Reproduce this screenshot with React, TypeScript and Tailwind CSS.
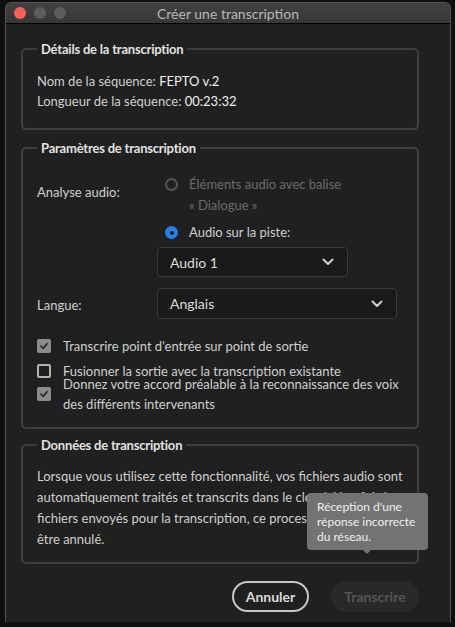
import React from "react";

const font = { fontFamily: "Lato, 'Open Sans', sans-serif" };

function Chevron() {
  return (
    <svg width="12" height="8" viewBox="0 0 12 8" fill="none">
      <path d="M1.5 1.5 L6 6 L10.5 1.5" stroke="#d0d0d0" strokeWidth="2" strokeLinecap="round" strokeLinejoin="round" />
    </svg>
  );
}

function Select({ label, className }: { label: string; className: string }) {
  return (
    <div className={`flex items-center justify-between rounded-[4px] border border-[#3a3a3a] bg-[#1a1a1a] pl-3 pr-[13px] text-[14px] text-[#dcdcdc] ${className}`}>
      <span>{label}</span>
      <Chevron />
    </div>
  );
}

function Checkbox({ checked }: { checked: boolean }) {
  if (!checked) {
    return <span className="h-[14px] w-[14px] shrink-0 rounded-[2px] border-2 border-[#b4b4b4] bg-[#1e1e1e]" />;
  }
  return (
    <span className="flex h-[14px] w-[14px] shrink-0 items-center justify-center rounded-[2px] bg-[#8c8c8c]">
      <svg width="10" height="10" viewBox="0 0 10 10" fill="none">
        <path d="M2 5.2 L4.2 7.3 L8 2.8" stroke="#2b2b2b" strokeWidth="1.8" strokeLinecap="round" strokeLinejoin="round" />
      </svg>
    </span>
  );
}

function Group({ title, className, children }: { title: string; className?: string; children: React.ReactNode }) {
  return (
    <fieldset className={`rounded-[5px] border-2 border-[#3e3e3e] px-[14px] ${className ?? ""}`}>
      <legend className="px-1 text-[13px] font-bold leading-5 tracking-[-0.2px] text-[#e2e2e2]">{title}</legend>
      {children}
    </fieldset>
  );
}

export default function App() {
  return (
    <div className="relative h-[627px] w-[455px] overflow-hidden bg-[#0f0f0f] pl-[5px] pr-[4px] pt-[2px]" style={font}>
      <div className="flex h-[620px] flex-col overflow-hidden rounded-t-[6px] border border-[#555] border-b-0 bg-[#202020]">
        {/* title bar */}
        <div className="relative flex h-[21px] shrink-0 items-center border-b border-black bg-gradient-to-b from-[#414141] to-[#373737]">
          <div className="absolute left-[8px] top-[4px] flex gap-[8px]">
            <span className="h-[12px] w-[12px] rounded-full bg-[#fc5f57]" />
            <span className="h-[12px] w-[12px] rounded-full bg-[#5d5d5d]" />
            <span className="h-[12px] w-[12px] rounded-full bg-[#5d5d5d]" />
          </div>
          <div className="w-full text-center text-[14px] text-[#b8b8b8]">Créer une transcription</div>
        </div>

        <div className="relative flex flex-1 flex-col pl-[15px] pr-[31px] pt-[15px] text-[13px] text-[#cfcfcf]">
          <Group title="Détails de la transcription" className="pb-[17px] pt-[12px]">
            <div className="leading-5">
              Nom de la séquence: <span className="text-[#f0f0f0]">FEPTO v.2</span>
            </div>
            <div className="leading-5">
              Longueur de la séquence: <span className="text-[#f0f0f0]">00:23:32</span>
            </div>
          </Group>

          <Group title="Paramètres de transcription" className="mt-2 pb-[13px] pt-[16px]">
            <div className="flex">
              <div className="w-[120px] shrink-0 pt-[8px] leading-5">Analyse audio:</div>
              <div className="flex flex-col">
                <div className="flex items-start gap-[11px] leading-[21px] text-[#6c6c6c]">
                  <span className="mt-[4px] ml-[8px] h-[13px] w-[13px] rounded-full border-2 border-[#555]" />
                  <span>
                    Éléments audio avec balise
                    <br />« Dialogue »
                  </span>
                </div>
                <div className="mt-[6px] flex items-center gap-[11px] leading-[21px]">
                  <span className="ml-[8px] flex h-[13px] w-[13px] items-center justify-center rounded-full bg-[#2680eb]">
                    <span className="h-[4px] w-[4px] rounded-full bg-[#1e1e1e]" />
                  </span>
                  <span>Audio sur la piste:</span>
                </div>
              </div>
            </div>
            <Select label="Audio 1" className="ml-[120px] mt-[4px] h-[30px] w-[191px]" />
            <div className="mt-[11px] flex items-center">
              <div className="w-[120px] shrink-0 pt-[2px] leading-5">Langue:</div>
              <Select label="Anglais" className="h-[31px] w-[240px]" />
            </div>

            <div className="mt-[17px] flex items-center gap-3 leading-5">
              <Checkbox checked />
              <span>Transcrire point d'entrée sur point de sortie</span>
            </div>
            <div className="mt-[8px] flex items-center gap-3 leading-[14px]">
              <Checkbox checked={false} />
              <span>Fusionner la sortie avec la transcription existante</span>
            </div>
            <div className="-mt-[4px] flex items-center gap-3 leading-5">
              <Checkbox checked />
              <span>
                Donnez votre accord préalable à la reconnaissance des voix
                <br />
                des différents intervenants
              </span>
            </div>
          </Group>

          <Group title="Données de transcription" className="mt-[6px] pb-[12px] pt-[11px]">
            <p className="leading-[21px]">
              Lorsque vous utilisez cette fonctionnalité, vos fichiers audio sont automatiquement traités et transcrits dans le
              cloud. Une fois les fichiers envoyés pour la transcription, ce processus ne peut pas être annulé.
            </p>
          </Group>

          <div className="mt-[17px] flex justify-end gap-[22px]">
            <button className="h-[31px] w-[77px] rounded-full border-2 border-[#c8c8c8] text-[14px] font-bold text-[#d8d8d8]">
              Annuler
            </button>
            <button className="h-[31px] w-[88px] rounded-full bg-[#292929] text-[14px] font-bold text-[#555]">
              Transcrire
            </button>
          </div>

          {/* tooltip */}
          <div className="absolute left-[301px] top-[469px] w-[121px] rounded-[4px] bg-[#737373] px-[10px] py-[6px] text-[12px] leading-[15px] text-[#f0f0f0]">
            Réception d'une réponse incorrecte du réseau.
            <span className="absolute bottom-[-4px] left-[56px] h-0 w-0 border-x-[4px] border-t-[4px] border-x-transparent border-t-[#737373]" />
          </div>
        </div>
      </div>
    </div>
  );
}
